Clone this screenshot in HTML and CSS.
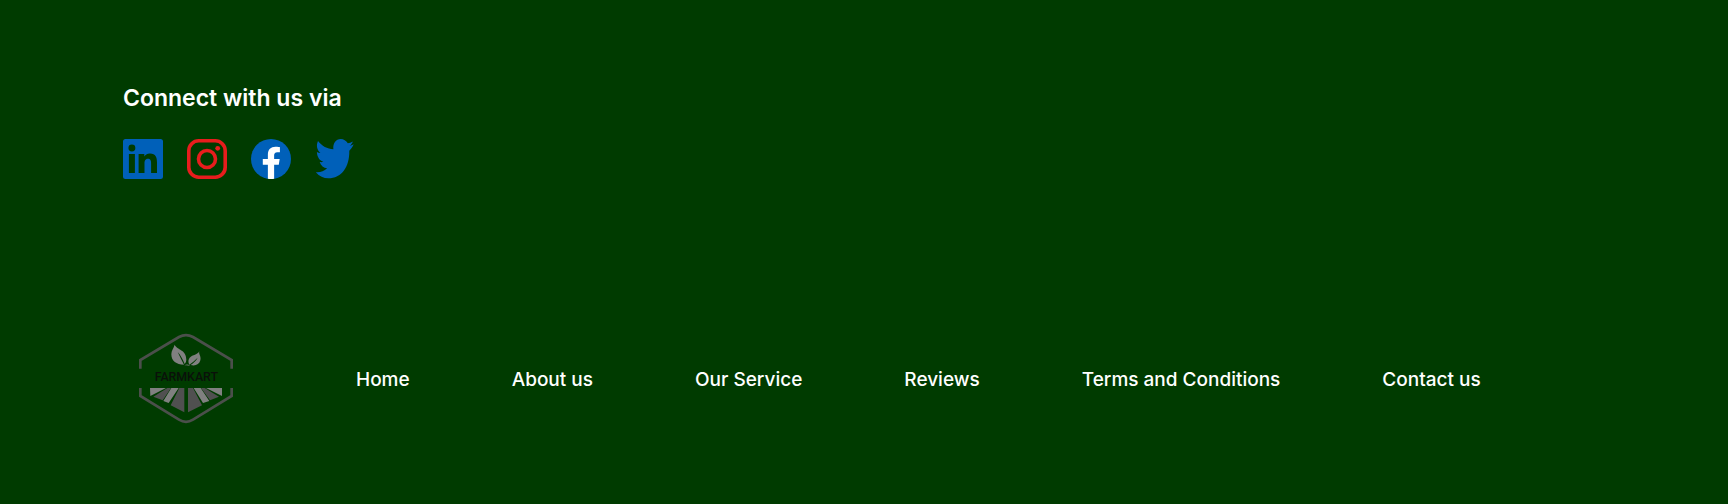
FILE: index.html
```html
<!DOCTYPE html>
<html lang="en">
<head>
<meta charset="utf-8">
<title>FarmKart</title>
<meta name="viewport" content="width=device-width, initial-scale=1">
<link rel="stylesheet" href="styles.css">
</head>
<body>
<footer class="footer">
  <section class="connect">
    <h2 class="connect-title">Connect with us via</h2>
    <div class="socials">
      <a class="social" href="#" aria-label="LinkedIn">
        <svg viewBox="0 0 40 40"><path class="blue" fill-rule="evenodd" d="M2.500 0H37.500A2.500 2.500 0 0 1 40 2.500V37.500A2.500 2.500 0 0 1 37.500 40H2.500A2.500 2.500 0 0 1 0 37.500V2.500A2.500 2.500 0 0 1 2.500 0ZM8.900 5.500a3.450 3.450 0 1 0 0 6.900a3.450 3.450 0 0 0 0-6.900ZM5.900 15V34H11.900V15ZM15.600 15V34H21.500V24.600C21.500 22.100 22 19.700 25 19.700S28.100 22.500 28.100 24.800V34H34V23.600C34 18.500 32.900 14.500 26.900 14.500C24 14.500 22.100 16.100 21.300 17.600V15Z"/></svg>
      </a>
      <a class="social" href="#" aria-label="Instagram">
        <svg viewBox="0 0 40 40"><g class="red-line"><rect x="1.800" y="1.800" width="36.400" height="36.400" rx="10"/><circle cx="20" cy="20" r="8.500"/></g><circle class="red" cx="30.700" cy="9.300" r="2.400"/></svg>
      </a>
      <a class="social" href="#" aria-label="Facebook">
        <svg viewBox="0 0 24 24"><circle class="blue" cx="12" cy="12" r="12"/><path class="white" d="M16.671 15.469 17.203 12H13.875V9.749c0-.949.465-1.874 1.956-1.874h1.513V4.922s-1.374-.235-2.686-.235c-2.741 0-4.533 1.662-4.533 4.669V12H7.078v3.469h3.047v8.385a12.100 12.100 0 0 0 3.750 0v-8.385Z"/></svg>
      </a>
      <a class="social" href="#" aria-label="Twitter">
        <svg viewBox="0 0 40 40"><path class="blue" d="M38.700 5.300C37.500 6.100 36 6.600 34.600 6.800C36.400 5.600 37.300 4 37.800 2.400C36.200 3.400 34.400 4 32.800 4.300C31.200 1.600 28.600 0 25.800 0C20.800 0 17.700 4.300 18.400 10.300C12.300 10 6.800 7 3 2C.9 6.500 2 11.100 5.400 13.900C4.100 13.800 2.900 13.500 1.900 12.900C2 18 4.900 21.700 8.400 22.800C7.200 23.200 5.900 23.200 4.700 23C5.800 26.900 8.700 29 12.100 29.300C8.900 32.400 4.800 33.700 .8 33.200C4.500 37.400 8.500 39.300 13.400 39.300C26.400 39.300 34.600 28.200 34.300 11.700C36.100 9.900 37.700 7.800 38.700 5.300Z"/></svg>
      </a>
    </div>
  </section>
  <div class="bottom">
    <a class="brand" href="#" aria-label="FarmKart home">
      <svg class="logo" viewBox="-21 -30 378 378">
        <path class="logo-frame" d="M31 131V105L147 36Q168 25 189 36L305 105V131M31 189V213L147 284Q168 297 189 284L305 213V189"/>
        <g class="logo-light">
          <path d="M134 59C141 76 169 72 169 104Q169 112 164 117C158 103 152 91 143 81C149 94 156 107 162 119C139 119 124 108 124 88C124 76 131 70 134 59Z"/>
          <path d="M208 79C205 88 214 93 211 106C208 119 195 124 182 120C191 114 198 107 203 98C195 106 187 113 178 119C169 101 184 91 195 89C201 87 205 84 208 79Z"/>
          <path d="M163 121Q172 115 180 122Q171 120 163 121Z"/>
          <path d="M60 189H108L61 213ZM228 189H276V213Z"/>
          <path d="M124 189H146L116 234L100 228ZM191 189H212L238 228L219 234Z"/>
        </g>
        <g class="logo-dark">
          <path d="M112 189H123L98 226L70 215ZM213 189H224L267 215L240 226Z"/>
          <path d="M148 189H163V262L122 241ZM174 189H189L216 241L174 262Z"/>
        </g>
        <text class="logo-text" x="169" y="169" text-anchor="middle">FARMKART</text>
      </svg>
    </a>
    <nav class="nav" aria-label="Footer">
      <a class="nav-link" href="#">Home</a>
      <a class="nav-link" href="#">About us</a>
      <a class="nav-link" href="#">Our Service</a>
      <a class="nav-link" href="#">Reviews</a>
      <a class="nav-link" href="#">Terms and Conditions</a>
      <a class="nav-link" href="#">Contact us</a>
    </nav>
  </div>
</footer>
</body>
</html>
```
FILE: styles.css
```css
* {
  box-sizing: border-box;
}

body {
  margin: 0;
  background: #003b00;
  color: #fff;
  font-family: Inter, "Liberation Sans", sans-serif;
}

.footer {
  display: flex;
  flex-direction: column;
  gap: 136px;
  padding: 82px 123px 63px;
}

.connect {
  display: flex;
  flex-direction: column;
  gap: 25px;
}

.connect-title {
  margin: 0;
  font-size: 23px;
  font-weight: 600;
  line-height: 32px;
}

.socials {
  display: flex;
  gap: 24px;
}

.social {
  display: block;
  width: 40px;
  height: 40px;
}

.social svg,
.logo {
  display: block;
  width: 100%;
  height: 100%;
}

.blue {
  fill: #0060b9;
}

.white {
  fill: #fff;
}

.red {
  fill: #e71d1d;
}

.red-line {
  fill: none;
  stroke: #e71d1d;
  stroke-width: 3.600;
}

.bottom {
  display: flex;
  align-items: center;
  gap: 107px;
}

.brand {
  flex: none;
  width: 126px;
  height: 126px;
}

.logo-frame {
  fill: none;
  stroke: #4b4f4b;
  stroke-width: 8;
}

.logo-light {
  fill: #808080;
}

.logo-dark {
  fill: #505050;
}

.logo-text {
  fill: #0a100a;
  font-family: Roboto, sans-serif;
  font-size: 37px;
  font-weight: 500;
}

.nav {
  display: flex;
  flex-wrap: wrap;
  gap: 24px 102px;
  padding-top: 3px;
}

.nav-link {
  color: inherit;
  font-size: 19px;
  font-weight: 500;
  line-height: 28px;
  text-decoration: none;
}
```
